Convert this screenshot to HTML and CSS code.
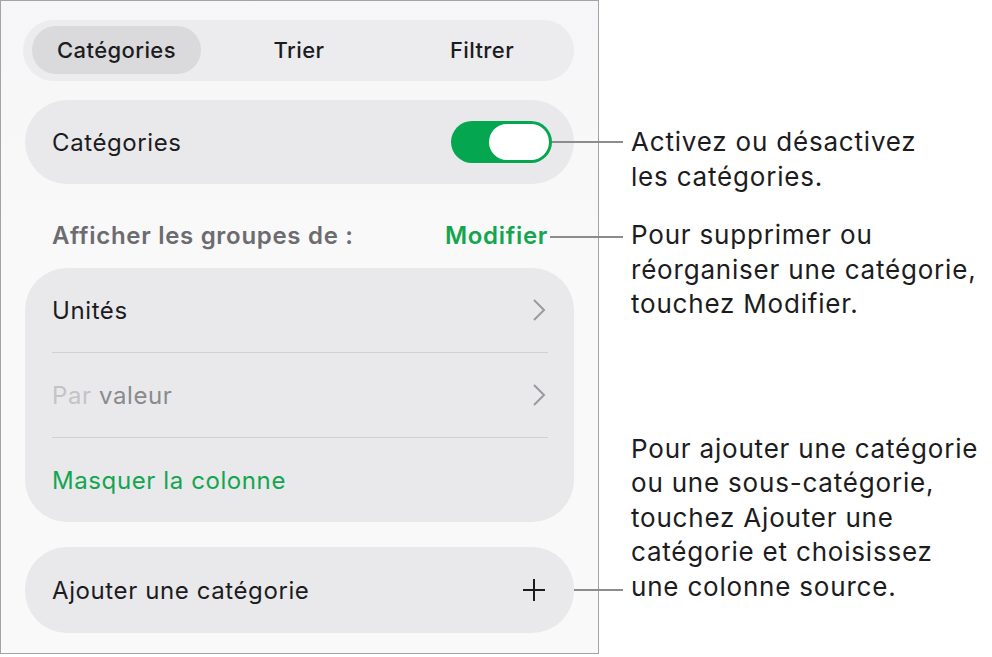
FILE: index.html
```html
<!DOCTYPE html>
<html lang="fr">
<head>
    <meta charset="UTF-8">
    <title>Catégories</title>
    <link rel="stylesheet" href="styles.css">
</head>
<body>

<div class="stage">
    <div class="panel">
        <!-- Tabs -->
        <div class="segmented">
            <div class="segment active">Catégories</div>
            <div class="segment">Trier</div>
            <div class="segment">Filtrer</div>
        </div>

        <!-- On/off row -->
        <div class="card row switch-row">
            <span class="label">Catégories</span>
            <span class="toggle on"><span class="thumb"></span></span>
        </div>

        <div class="section-head">
            <span class="section-title">Afficher les groupes de :</span>
            <span class="edit-link">Modifier</span>
        </div>

        <div class="card group">
            <div class="row">
                <span class="label">Unités</span>
                <svg class="chevron" viewBox="0 0 14 24" width="14" height="24"><path d="M2 2 L12 12 L2 22"/></svg>
            </div>
            <div class="row">
                <span class="label muted"><span class="faint">Par</span> valeur</span>
                <svg class="chevron" viewBox="0 0 14 24" width="14" height="24"><path d="M2 2 L12 12 L2 22"/></svg>
            </div>
            <div class="row">
                <span class="label green">Masquer la colonne</span>
            </div>
        </div>

        <div class="card row add-row">
            <span class="label">Ajouter une catégorie</span>
            <svg class="plus" viewBox="0 0 24 24" width="24" height="24"><path d="M12 1 V23 M1 12 H23"/></svg>
        </div>
    </div>

    <div class="notes">
        <p class="note note-toggle">Activez ou désactivez<br>les catégories.</p>
        <p class="note note-edit">Pour supprimer ou<br>réorganiser une catégorie,<br>touchez Modifier.</p>
        <p class="note note-add">Pour ajouter une catégorie<br>ou une sous-catégorie,<br>touchez Ajouter une<br>catégorie et choisissez<br>une colonne source.</p>
    </div>
</div>

</body>
</html>
```

FILE: styles.css
```css
body {
    margin: 0;
    background: #fff;
    font-family: 'Inter', 'Noto Sans', sans-serif;
    color: #1c1c1e;
}
.stage {
    display: flex;
    align-items: flex-start;
}
.panel {
    box-sizing: border-box;
    width: 599px;
    height: 654px;
    border: 1px solid #a3a3a3;
    background: linear-gradient(#f6f6f8, #f9f9f9 40%);
    padding: 19px 24px 0 24px;
    display: flex;
    flex-direction: column;
}

/* tabs */
.segmented {
    display: flex;
    height: 61px;
    box-sizing: border-box;
    padding: 6px 7px 7px 9px;
    background: #ececee;
    border-radius: 31px;
    margin: 0 0 19px -2px;
}
.segment {
    flex: 1;
    display: flex;
    align-items: center;
    justify-content: center;
    padding-left: 13px;
    font-size: 22px;
    font-weight: 500;
    letter-spacing: 0.4px;
    border-radius: 24px;
}
.segment.active {
    background: #dadadd;
    flex: 0 0 169px;
    padding-left: 0;
}

/* cards */
.card {
    background: #e9e9eb;
    border-radius: 42px;
}
.row {
    display: flex;
    align-items: center;
    justify-content: space-between;
    height: 84px;
    padding: 0 26px 0 27px;
}
.switch-row {
    padding-right: 22px;
}
.label {
    font-size: 24px;
    letter-spacing: 0.6px;
}
.muted {
    color: #8a8a8e;
}
.faint {
    color: #c3c3c7;
}
.green {
    color: #13a550;
}

/* switch */
.toggle {
    position: relative;
    box-sizing: border-box;
    width: 101px;
    height: 42px;
    border-radius: 21px;
    background: #04a64f;
    padding: 3px;
    display: flex;
    justify-content: flex-end;
}
.thumb {
    width: 60px;
    height: 36px;
    border-radius: 18px;
    background: #fff;
}
.toggle::after {
    content: "";
    position: absolute;
    left: 100%;
    top: 20px;
    width: 71px;
    height: 2px;
    background: #8c8c8c;
}

.section-head {
    display: flex;
    justify-content: space-between;
    align-items: center;
    height: 84px;
    box-sizing: border-box;
    padding: 36px 26px 18px 27px;
    font-size: 24px;
    font-weight: 600;
    letter-spacing: 0.7px;
}
.section-title {
    color: #6c6c70;
}
.edit-link {
    position: relative;
    color: #13a550;
}
.edit-link::after {
    content: "";
    position: absolute;
    left: calc(100% + 2px);
    top: 15px;
    width: 73px;
    height: 2px;
    background: #8c8c8c;
}

.group {
    padding: 0 26px 0 27px;
    border-radius: 42px;
}
.group .row {
    padding: 0;
    height: 84px;
}
.group .row + .row {
    border-top: 1px solid #d1d1d4;
}
.chevron {
    fill: none;
    stroke: #9a9a9e;
    stroke-width: 2;
    margin-right: 2px;
}

.add-row {
    position: relative;
    margin-top: 25px;
    height: 86px;
}
.add-row::after {
    content: "";
    position: absolute;
    left: 100%;
    top: 42px;
    width: 49px;
    height: 2px;
    background: #8c8c8c;
}
.plus {
    fill: none;
    stroke: #1c1c1e;
    stroke-width: 2;
    margin-right: 2px;
}

/* callouts */
.notes {
    padding-left: 32px;
}
.note {
    margin: 0;
    font-size: 26px;
    line-height: 34.5px;
    letter-spacing: 0.8px;
    color: #1c1c1e;
}
.note-toggle {
    margin-top: 125px;
}
.note-edit {
    margin-top: 24px;
}
.note-add {
    margin-top: 110px;
}
```
